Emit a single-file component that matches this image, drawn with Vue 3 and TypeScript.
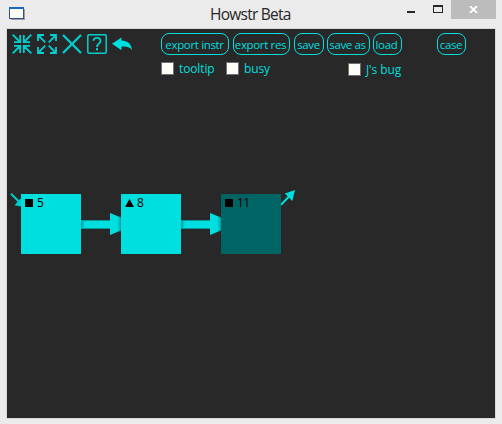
<script setup lang="ts">
interface ToolButton { label: string; size: string }
interface StationNode { id: number; label: string; shape: 'square' | 'triangle'; x: number; dark?: boolean }

const buttons: ToolButton[] = [
  { label: 'export instr', size: 'w-instr' },
  { label: 'export res', size: 'w-res' },
  { label: 'save', size: 'w-save' },
  { label: 'save as', size: 'w-saveas' },
  { label: 'load', size: 'w-load' },
  { label: 'case', size: 'w-case' },
]
const options = [
  { label: 'tooltip', cls: 'o-tooltip' },
  { label: 'busy', cls: 'o-busy' },
  { label: "J's bug", cls: 'o-bug' },
]
const nodes: StationNode[] = [
  { id: 1, label: '5', shape: 'square', x: 14 },
  { id: 2, label: '8', shape: 'triangle', x: 114 },
  { id: 3, label: '11', shape: 'square', x: 214, dark: true },
]
const links: number[] = [74, 174]
</script>

<template>
  <div class="window">
    <header class="titlebar">
      <svg class="app-icon" width="18" height="14" viewBox="0 0 18 14">
        <path d="M2 2H16V13H2Z" fill="#85858a" opacity=".75" />
        <rect x="0.5" y="0.5" width="14" height="11" fill="#fffffa" stroke="#2e4f80" />
        <path d="M0 0H15V2H0Z" fill="#1769c8" />
      </svg>
      <h1 class="title">Howstr Beta</h1>
      <div class="controls">
        <svg width="61" height="19" viewBox="0 0 61 19">
          <path d="M17 11H25V13H17Z" fill="#262626" />
          <path d="M43 5H53V13H43ZM44 7V12H52V7Z" fill="#262626" fill-rule="evenodd" />
        </svg>
        <div class="close">
          <svg width="9" height="7" viewBox="0 0 9 7">
            <path d="M1 0L8 7M8 0L1 7" stroke="#fffffa" stroke-width="1.8" />
          </svg>
        </div>
      </div>
    </header>

    <main class="client">
      <div class="toolbar">
        <div class="icons">
          <svg viewBox="0 0 20 20">
            <path d="M0.7 0.7L8 8M2 8.2H8.2V1M19.3 0.7L12 8M18 8.2H11.8V1M0.7 19.3L8 12M2 11.8H8.2V19M19.3 19.3L12 12M18 11.8H11.8V19" />
          </svg>
          <svg viewBox="0 0 20 20">
            <path d="M1 1L8.3 8.3M1 7V1H7M19 1L11.7 8.3M13 1H19V7M1 19L8.3 11.7M1 13V19H7M19 19L11.7 11.7M13 19H19V13" />
          </svg>
          <svg viewBox="0 0 20 20"><path class="cross" d="M1 1L19 19M19 1L1 19" /></svg>
          <svg viewBox="0 0 20 20">
            <rect x="0.8" y="0.8" width="18.4" height="18.4" rx="1.2" class="box" />
            <path d="M6.5 6.8C6.5 2.8 13.5 2.8 13.5 6.9C13.5 9.6 10 9.4 10 13" />
            <path d="M9 14.3H11V16.2H9Z" class="solid" />
          </svg>
          <svg viewBox="0 0 20 20">
            <path class="solid" d="M0 9.8L9.5 3.4V6.6C15.5 6.6 19.5 10 20 16C17.5 12.8 14 12.4 9.5 12.7V16.2Z" />
          </svg>
        </div>
        <div class="buttons">
          <button v-for="b in buttons" :key="b.label" :class="b.size">{{ b.label }}</button>
        </div>
      </div>
      <div class="options">
        <label v-for="o in options" :key="o.label" :class="o.cls">
          <span class="check"></span><span class="text">{{ o.label }}</span>
        </label>
      </div>

      <section class="canvas">
        <svg class="wires" width="488" height="120" viewBox="0 150 488 120">
          <defs>
            <linearGradient id="shaft" x1="0" x2="1">
              <stop offset="0" stop-color="#009c9c" />
              <stop offset=".14" stop-color="#00dfdf" />
            </linearGradient>
            <linearGradient id="head" x1="0" x2="1">
              <stop offset=".65" stop-color="#00dfdf" />
              <stop offset="1" stop-color="#00a0a0" />
            </linearGradient>
          </defs>
          <g v-for="x in links" :key="x" :transform="`translate(${x} 0)`">
            <rect x="0" y="191" width="30" height="8" fill="url(#shaft)" />
            <path d="M0 190.5H29M0 198.5H29" stroke="#009c9c" />
            <path d="M29 183L40 187.5V200.5L29 205Z" fill="url(#head)" />
          </g>
          <path d="M4 163.7L12 171.7" stroke="#00cfd1" stroke-width="2" />
          <path d="M14 168.5V176.5L7.5 175.3L13 169Z" fill="#00cfd1" />
          <path d="M274 174.7L282 166.5" stroke="#00dfdf" stroke-width="2" />
          <path d="M288 160L285.3 171L277.8 163.6Z" fill="#00dfdf" />
        </svg>
        <div
          v-for="n in nodes"
          :key="n.id"
          class="node"
          :class="{ dark: n.dark }"
          :style="{ left: n.x + 'px' }"
        >
          <svg width="9" height="8" viewBox="0 0 9 8">
            <path :d="n.shape === 'square' ? 'M0 0H8V8H0Z' : 'M4.5 0L9 8H0Z'" />
          </svg>
          <span>{{ n.label }}</span>
        </div>
      </section>
    </main>
  </div>
</template>

<style>
body { margin: 0; background: #ebebeb; overflow: hidden; }
</style>

<style scoped>
.window {
  box-sizing: border-box;
  width: 502px;
  height: 424px;
  padding: 0 6px 5px;
  background: #ebebeb;
  display: flex;
  flex-direction: column;
  font-family: "Open Sans", "Noto Sans", sans-serif;
}
.titlebar {
  height: 28px;
  display: grid;
  grid-template-columns: 61px 1fr 106px;
}
.app-icon { margin: 7px 0 0 3px; }
.title {
  margin: 4px 0 0 143px;
  font-size: 15.5px;
  line-height: 20px;
  font-weight: 400;
  letter-spacing: -0.75px;
  color: #262626;
  white-space: nowrap;
}
.controls { display: flex; }
.controls > svg { flex: none; }
.close {
  width: 45px;
  height: 19px;
  background: #bcbcbc;
  display: flex;
  align-items: center;
  justify-content: center;
}
.client {
  flex: 1;
  border: 1px solid #d8d8d8;
  background: #282828;
  display: flex;
  flex-direction: column;
  color: #00dfdf;
  font-size: 12px;
}
.toolbar { display: flex; padding: 4px 0 0 5px; }
.icons { display: flex; gap: 5px; padding-top: 1px; width: 149px; }
.icons svg { width: 20px; height: 20px; fill: none; stroke: #00cfd1; stroke-width: 1.8; }
.icons .cross { stroke-width: 2.3; }
.icons .box { stroke-width: 1.5; }
.icons .solid { fill: #00dfdf; stroke: none; }
.buttons { display: flex; gap: 4px; }
button {
  box-sizing: border-box;
  height: 22px;
  padding: 2px 1px 0 0;
  border: 1px solid #00dfdf;
  border-radius: 8px;
  background: none;
  color: inherit;
  font: inherit;
  font-size: 11.5px;
  line-height: 18px;
  letter-spacing: -0.35px;
  white-space: nowrap;
  display: flex;
  justify-content: center;
}
.w-instr { width: 68px; }
.w-res { width: 57px; padding-right: 2px; }
.w-save { width: 30px; }
.w-saveas { width: 43px; margin-left: -1px; padding-right: 2px; }
.w-load { width: 29px; margin-left: -1px; padding-right: 2px; }
.w-case { width: 29px; margin-left: 31px; padding-right: 1px; }
.options { display: flex; padding: 7px 0 0 154px; height: 20px; }
label { display: flex; gap: 5px; height: 14px; line-height: 14px; white-space: nowrap; letter-spacing: -0.12px; }
.check {
  box-sizing: border-box;
  width: 13px;
  height: 13px;
  background: #fffffa;
  border: 1px solid #707070;
}
.o-tooltip { width: 65px; }
.o-busy { width: 122px; }
.o-bug { margin-top: 1px; }
.canvas { position: relative; flex: 1; }
.wires { position: absolute; left: 0; top: 98px; }
.node {
  position: absolute;
  top: 112px;
  box-sizing: border-box;
  width: 60px;
  height: 60px;
  padding: 5px 0 0 4px;
  display: flex;
  gap: 3px;
  background: #00dfdf;
  color: #000;
  line-height: 8px;
  letter-spacing: -0.6px;
}
.node.dark { background: #006464; }
</style>
